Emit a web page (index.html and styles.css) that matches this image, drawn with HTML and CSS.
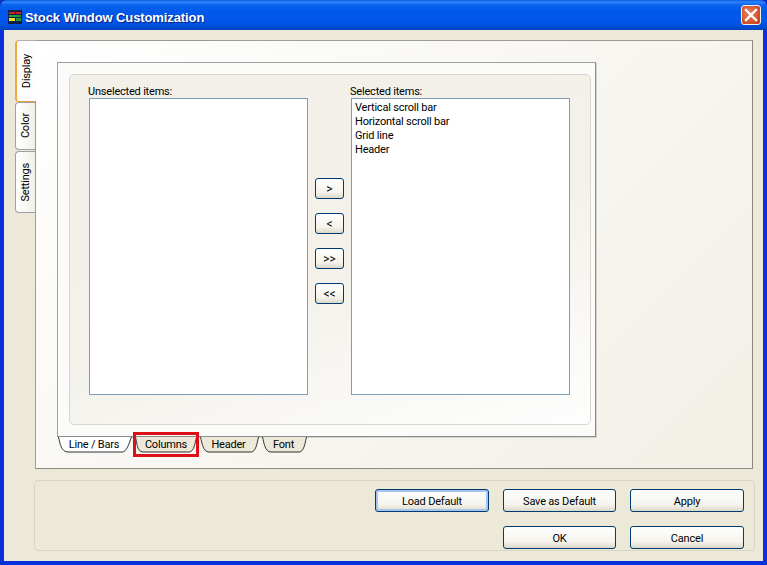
FILE: index.html
```html
<!DOCTYPE html>
<html lang="en">
<head>
<meta charset="utf-8">
<title>Stock Window Customization</title>
<link rel="stylesheet" href="styles.css">
</head>
<body>
<div class="window">
  <header class="titlebar">
    <svg class="app-icon" width="14" height="14" viewBox="0 0 14 14">
      <rect width="14" height="14" fill="#10204a"/>
      <rect x="1" y="2" width="6" height="2" fill="#d02020"/>
      <rect x="8" y="2" width="5" height="2" fill="#d02020"/>
      <rect x="1" y="5" width="12" height="2" fill="#20a030"/>
      <rect x="1" y="8" width="6" height="3" fill="#e8e020"/>
      <rect x="8" y="8" width="5" height="3" fill="#20a030"/>
    </svg>
    <span class="title">Stock Window Customization</span>
    <button class="close" aria-label="Close">
      <svg width="14" height="14" viewBox="0 0 14 14"><path d="M2 2 12 12M12 2 2 12" stroke="#fff" stroke-width="2.4" stroke-linecap="square" fill="none"/></svg>
    </button>
  </header>
  <div class="client">
    <div class="main">
      <nav class="side-tabs">
        <div class="side-tab active"><span>Display</span></div>
        <div class="side-tab color"><span>Color</span></div>
        <div class="side-tab settings"><span>Settings</span></div>
      </nav>
      <section class="outer">
        <div class="inner">
          <div class="group">
            <div class="col">
              <label class="col-label">Unselected items:</label>
              <div class="list"></div>
            </div>
            <div class="move-btns">
              <button class="btn move">&gt;</button>
              <button class="btn move">&lt;</button>
              <button class="btn move">&gt;&gt;</button>
              <button class="btn move">&lt;&lt;</button>
            </div>
            <div class="col col-right">
              <label class="col-label">Selected items:</label>
              <div class="list">
                <div>Vertical scroll bar</div>
                <div>Horizontal scroll bar</div>
                <div>Grid line</div>
                <div>Header</div>
              </div>
            </div>
          </div>
        </div>
        <div class="bottom-tabs">
          <div class="b-tab t1 active">
            <svg width="74" height="16" viewBox="0 0 74 16"><path d="M.5 0C2 6 3 15 10 15H64C69 15 71 6 73.500 0" fill="#fff" stroke="#333"/></svg>
            <span>Line / Bars</span>
          </div>
          <div class="b-tab t2">
            <svg width="62" height="16" viewBox="0 0 62 16"><path d="M.5 0C2 6 2 15 8 15H54C59 15 60 6 61.500 0" fill="#ece9d8" stroke="#333"/></svg>
            <span>Columns</span>
            <i class="highlight"></i>
          </div>
          <div class="b-tab t3">
            <svg width="59" height="16" viewBox="0 0 59 16"><path d="M.5 0C2 6 3 15 9 15H51C56 15 57 6 58.500 0" fill="#ece9d8" stroke="#333"/></svg>
            <span>Header</span>
          </div>
          <div class="b-tab t4">
            <svg width="45" height="16" viewBox="0 0 45 16"><path d="M.5 0C2 6 3 15 9 15H37C42 15 43 6 44.500 0" fill="#ece9d8" stroke="#333"/></svg>
            <span>Font</span>
          </div>
        </div>
      </section>
    </div>
    <footer class="footer">
      <div class="foot-row">
        <button class="btn act default">Load Default</button>
        <button class="btn act narrow">Save as Default</button>
        <button class="btn act">Apply</button>
      </div>
      <div class="foot-row">
        <button class="btn act narrow">OK</button>
        <button class="btn act">Cancel</button>
      </div>
    </footer>
  </div>
</div>
</body>
</html>
```
FILE: styles.css
```css
* { box-sizing: border-box; }
html, body { margin: 0; padding: 0; }
body { width: 767px; height: 565px; overflow: hidden; background: #0a2fc8; font-family: Roboto, "Noto Sans", sans-serif; font-size: 11px; letter-spacing: -.2px; color: #000; }
button { font: inherit; letter-spacing: inherit; color: inherit; padding: 1px 0 0; }
.window { width: 767px; height: 565px; display: flex; flex-direction: column; background: #0831d9; border-radius: 7px 7px 0 0; }
.titlebar { height: 30px; flex: none; display: flex; align-items: center; padding: 3px 6px 0 8px; border-radius: 7px 7px 0 0; background: linear-gradient(#0a5ae0 0, #2f86fa 2px, #0a62ee 5px, #0058ea 12px, #0058ee 20px, #0050dc 26px, #0040bc 30px); }
.app-icon { flex: none; }
.title { margin: 1px 0 0 3px; font-family: "Liberation Sans", sans-serif; font-weight: 700; font-size: 13px; letter-spacing: -.1px; color: #fff; text-shadow: 1px 1px 1px #0a1f80; flex: 1; }
.close { width: 20px; height: 20px; margin-top: -3px; padding: 0; border: 1px solid #f0f0f0; border-radius: 3px; display: flex; align-items: center; justify-content: center; background: radial-gradient(circle at 40% 40%, #e8825e, #cc4a22 75%, #b83a18); }
.client { flex: 1; margin: 0 4px 4px; padding: 10px 10px 10px 11px; background: #ece9d8; display: flex; flex-direction: column; }
.main { height: 429px; flex: none; display: flex; }
.side-tabs { width: 21px; flex: none; display: flex; flex-direction: column; align-items: flex-end; position: relative; z-index: 1; }
.side-tab { width: 20px; display: flex; align-items: center; justify-content: center; background: linear-gradient(90deg, #fff, #f2f0e6); border: 1px solid #a0a0a0; border-right: 0; border-radius: 4px 0 0 4px; }
.side-tab span { writing-mode: vertical-rl; transform: rotate(180deg); line-height: 1; }
.side-tab.active { width: 21px; height: 62px; background: #fdfdfd; border-left: 2px solid #f2a93c; border-top-color: #b0b0b0; border-bottom-color: #e6a040; }
.side-tab.color { height: 48px; margin-right: 1px; }
.side-tab.settings { height: 62px; margin-top: 1px; margin-right: 1px; }
.outer { width: 718px; height: 429px; margin-left: -1px; padding: 21px 0 0 21px; border: 1px solid #9c9c94; border-right-color: #8a8a82; border-bottom-color: #8a8a82; background: linear-gradient(135deg, #fff 0, #f9f8f4 40%, #f2efe6 100%); }
.inner { width: 539px; height: 375px; padding: 11px 5px 11px 11px; border: 1px solid #a0a0a0; border-right-color: #8c8c8c; border-bottom-color: #8c8c8c; box-shadow: 1px 1px 0 #d4d2ca; background: #fbfbf9; }
.group { width: 522px; height: 351px; display: flex; padding: 9px 0 0 18px; border: 1px solid #d8d6cc; border-radius: 5px; background: linear-gradient(160deg, #f2f0e8 0, #f3f1ea 55%, #fefefe 100%); }
.col { width: 220px; flex: none; display: flex; flex-direction: column; }
.col-right { margin-left: 6px; }
.col-label { height: 14px; line-height: 14px; padding-top: 1px; white-space: nowrap; }
.list { width: 219px; height: 297px; margin-left: 1px; padding: 2px 3px 0; background: #fff; border: 1px solid #7f9db9; line-height: 14px; }
.move-btns { width: 29px; flex: none; margin: 94px 0 0 7px; display: flex; flex-direction: column; gap: 14px; }
.btn { border: 1px solid #003c74; border-radius: 3px; background: linear-gradient(#fff, #f4f3ec 70%, #dcd8c8); }
.move { width: 29px; height: 21px; padding: 0; font-size: 12px; letter-spacing: 0; }
.bottom-tabs { display: flex; margin-left: 1px; height: 16px; }
.b-tab { position: relative; height: 16px; display: flex; align-items: center; justify-content: center; }
.b-tab svg { position: absolute; left: 0; top: 0; }
.b-tab span { position: relative; padding-bottom: 1px; }
.t1 { width: 74px; padding-right: 2px; }
.t2 { width: 62px; margin-left: 3px; }
.t3 { width: 59px; margin-left: 3px; padding-right: 2px; }
.t4 { width: 45px; margin-left: 3px; padding-right: 2px; }
.highlight { position: absolute; left: -2px; right: -2px; top: -5px; bottom: -4px; border: 3px solid #de0f17; }
.footer { width: 721px; height: 71px; flex: none; margin: 11px 0 0 19px; padding: 8px 10px 0 0; border: 1px solid #d8d5c5; border-radius: 4px; display: flex; flex-direction: column; gap: 14px; }
.foot-row { display: flex; justify-content: flex-end; gap: 14px; }
.act { width: 114px; height: 23px; }
.narrow { width: 113px; }
.default { border-color: #003c74; box-shadow: inset 0 0 0 2px #a8c4ec; }
```
